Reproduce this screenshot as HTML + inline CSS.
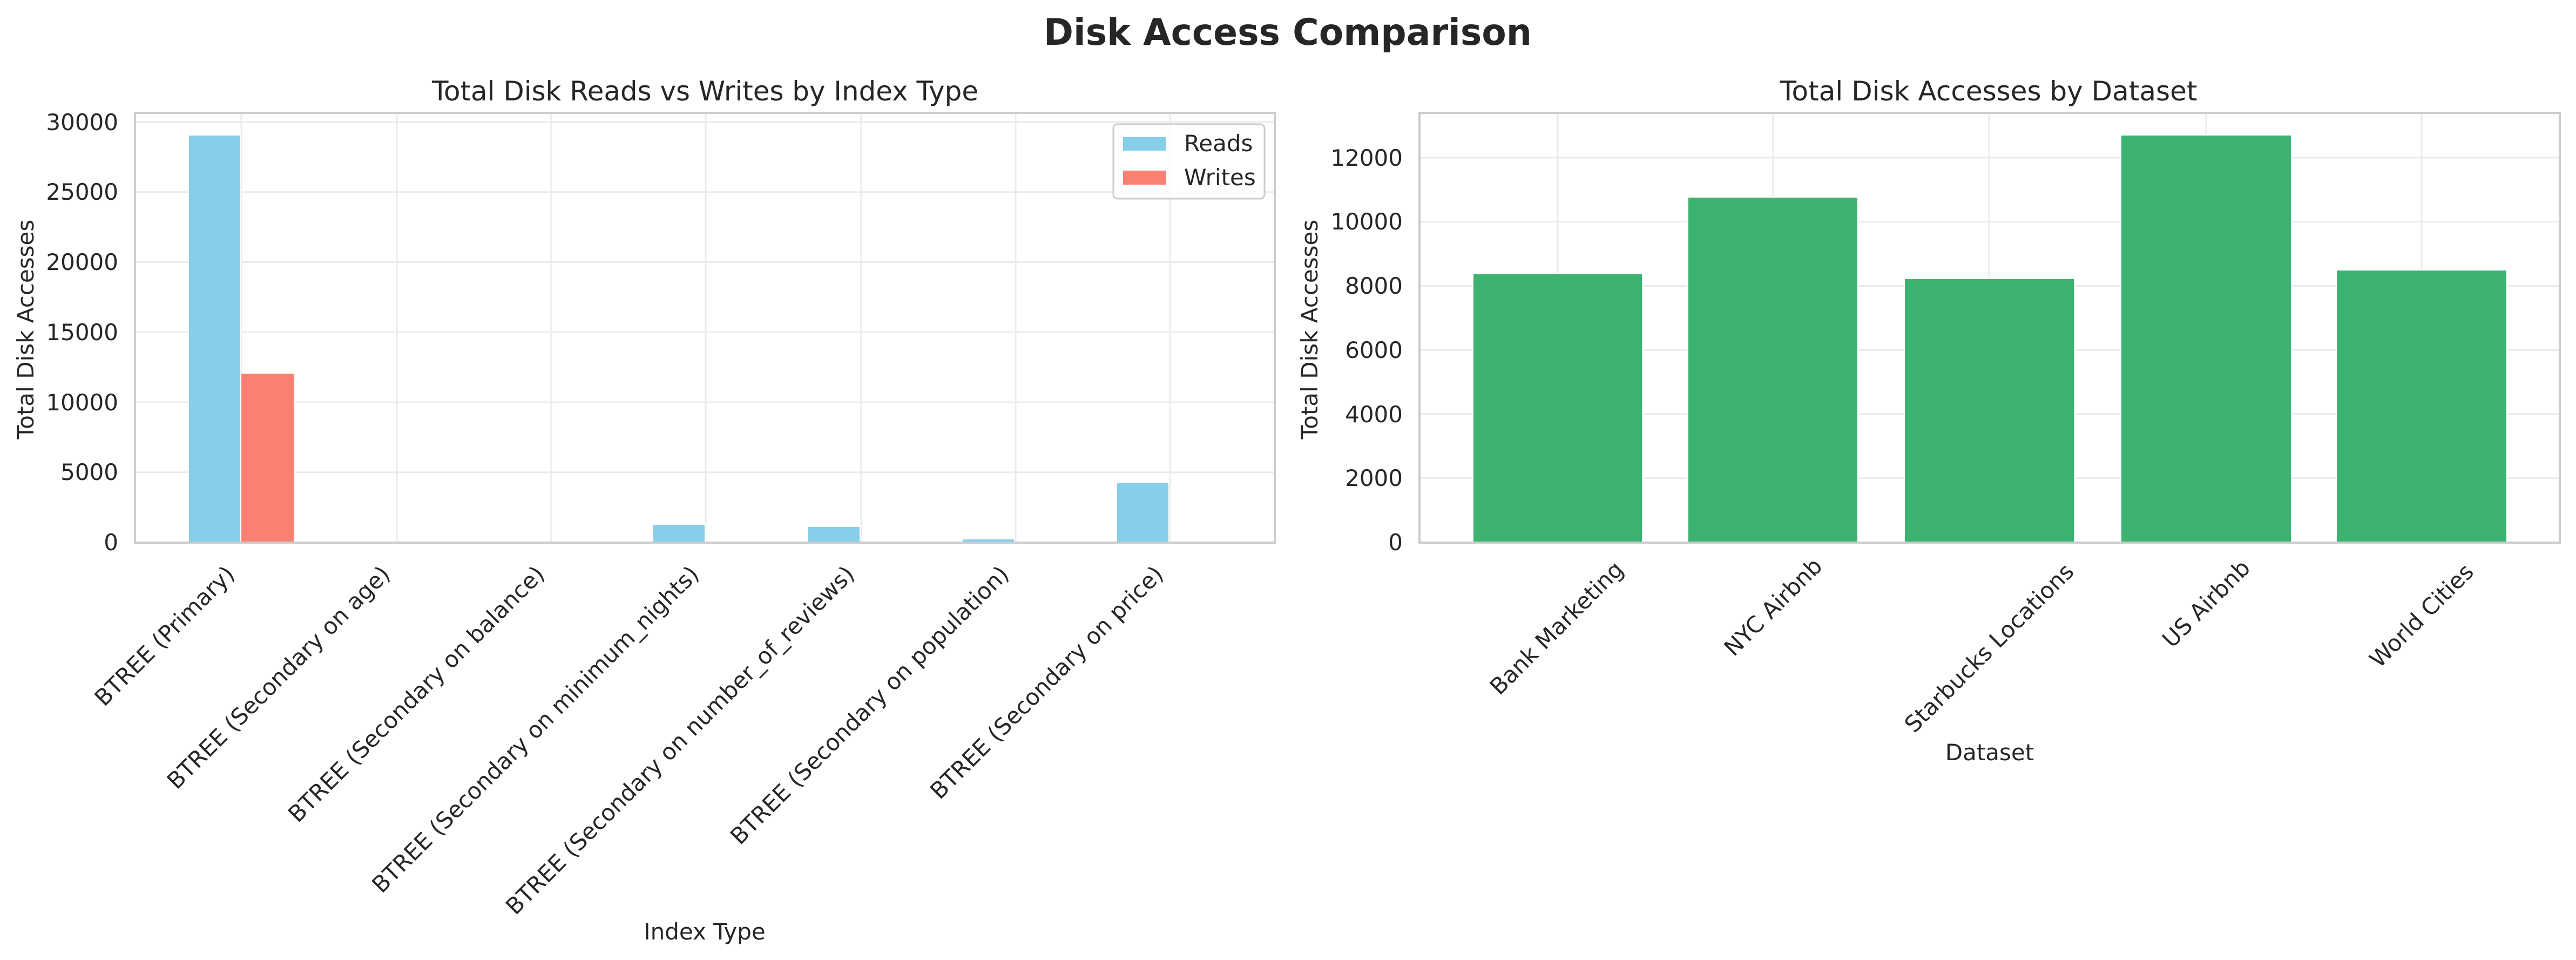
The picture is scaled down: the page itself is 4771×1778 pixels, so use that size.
<!DOCTYPE html>
<html><head><meta charset="utf-8"><style>
html,body{margin:0;padding:0;background:#fff;}
svg{display:block;}
text{font-family:"DejaVu Sans","Liberation Sans",sans-serif;fill:#262626;}
</style></head><body>
<svg width="4771" height="1778" viewBox="0 0 4771 1778" xmlns="http://www.w3.org/2000/svg">
<rect width="4771" height="1778" fill="#fff"/>
<text x="2385" y="83" font-size="68" font-weight="bold" text-anchor="middle" textLength="904" lengthAdjust="spacingAndGlyphs">Disk Access Comparison</text>

<!-- LEFT AXES -->
<text x="1306" y="186" font-size="50" text-anchor="middle" textLength="1012" lengthAdjust="spacingAndGlyphs">Total Disk Reads vs Writes by Index Type</text>
<g stroke="#ebebeb" stroke-width="3">
<line x1="250" x2="2361" y1="1004.5" y2="1004.5"/>
<line x1="250" x2="2361" y1="874.75" y2="874.75"/>
<line x1="250" x2="2361" y1="745" y2="745"/>
<line x1="250" x2="2361" y1="615.25" y2="615.25"/>
<line x1="250" x2="2361" y1="485.5" y2="485.5"/>
<line x1="250" x2="2361" y1="355.75" y2="355.75"/>
<line x1="250" x2="2361" y1="226" y2="226"/>
<line y1="209" y2="1005" x1="447" x2="447"/>
<line y1="209" y2="1005" x1="735" x2="735"/>
<line y1="209" y2="1005" x1="1021" x2="1021"/>
<line y1="209" y2="1005" x1="1307" x2="1307"/>
<line y1="209" y2="1005" x1="1595" x2="1595"/>
<line y1="209" y2="1005" x1="1881" x2="1881"/>
<line y1="209" y2="1005" x1="2167" x2="2167"/>
</g>
<g fill="#87ceeb" stroke="#fff" stroke-width="2">
<rect x="349" y="250" width="97" height="755"/>
<rect x="1209" y="971" width="97" height="34"/>
<rect x="1496" y="975" width="97" height="30"/>
<rect x="1782" y="998" width="97" height="7"/>
<rect x="2068" y="894" width="97" height="111"/>
</g>
<rect x="446" y="691" width="99" height="314" fill="#fa8072" stroke="#fff" stroke-width="2"/>
<rect x="250" y="209" width="2111" height="796" fill="none" stroke="#cccccc" stroke-width="4"/>
<g font-size="42" text-anchor="end">
<text x="219" y="1019">0</text>
<text x="219" y="889">5000</text>
<text x="219" y="760">10000</text>
<text x="219" y="630">15000</text>
<text x="219" y="500">20000</text>
<text x="219" y="370">25000</text>
<text x="219" y="241">30000</text>
</g>
<text transform="translate(62,610) rotate(-90)" font-size="42" text-anchor="middle">Total Disk Accesses</text>
<rect x="2062" y="230" width="280" height="138" rx="8" fill="#fff" fill-opacity="0.8" stroke="#cccccc" stroke-width="3"/>
<rect x="2080" y="254" width="80" height="25" fill="#87ceeb"/>
<rect x="2080" y="316" width="80" height="26" fill="#fa8072"/>
<text x="2193" y="280" font-size="42">Reads</text>
<text x="2193" y="343" font-size="42">Writes</text>
<g font-size="42" text-anchor="end">
<text transform="translate(437,1066) rotate(-45)">BTREE (Primary)</text>
<text transform="translate(725,1066) rotate(-45)">BTREE (Secondary on age)</text>
<text transform="translate(1011,1066) rotate(-45)">BTREE (Secondary on balance)</text>
<text transform="translate(1297,1066) rotate(-45)">BTREE (Secondary on minimum_nights)</text>
<text transform="translate(1585,1066) rotate(-45)">BTREE (Secondary on number_of_reviews)</text>
<text transform="translate(1871,1066) rotate(-45)">BTREE (Secondary on population)</text>
<text transform="translate(2157,1066) rotate(-45)">BTREE (Secondary on price)</text>
</g>
<text x="1305" y="1740" font-size="42" text-anchor="middle">Index Type</text>

<!-- RIGHT AXES -->
<text x="3683" y="186" font-size="50" text-anchor="middle" textLength="773" lengthAdjust="spacingAndGlyphs">Total Disk Accesses by Dataset</text>
<g stroke="#ebebeb" stroke-width="3">
<line x1="2629" x2="4741" y1="1004.5" y2="1004.5"/>
<line x1="2629" x2="4741" y1="885.75" y2="885.75"/>
<line x1="2629" x2="4741" y1="767" y2="767"/>
<line x1="2629" x2="4741" y1="648.25" y2="648.25"/>
<line x1="2629" x2="4741" y1="529.5" y2="529.5"/>
<line x1="2629" x2="4741" y1="410.75" y2="410.75"/>
<line x1="2629" x2="4741" y1="292" y2="292"/>
<line y1="209" y2="1005" x1="2885" x2="2885"/>
<line y1="209" y2="1005" x1="3284" x2="3284"/>
<line y1="209" y2="1005" x1="3684" x2="3684"/>
<line y1="209" y2="1005" x1="4086" x2="4086"/>
<line y1="209" y2="1005" x1="4485" x2="4485"/>
</g>
<g fill="#3cb371" stroke="#fff" stroke-width="2">
<rect x="2728" y="507" width="314" height="498"/>
<rect x="3126" y="365" width="315" height="640"/>
<rect x="3527" y="516" width="315" height="489"/>
<rect x="3928" y="250" width="316" height="755"/>
<rect x="4327" y="500" width="316" height="505"/>
</g>
<rect x="2629" y="209" width="2112" height="796" fill="none" stroke="#cccccc" stroke-width="4"/>
<g font-size="42" text-anchor="end">
<text x="2598" y="1019">0</text>
<text x="2598" y="900">2000</text>
<text x="2598" y="782">4000</text>
<text x="2598" y="663">6000</text>
<text x="2598" y="544">8000</text>
<text x="2598" y="425">10000</text>
<text x="2598" y="307">12000</text>
</g>
<text transform="translate(2440,610) rotate(-90)" font-size="42" text-anchor="middle">Total Disk Accesses</text>
<g font-size="42" text-anchor="middle" dominant-baseline="central">
<text transform="translate(2883,1163) rotate(-45)">Bank Marketing</text>
<text transform="translate(3284,1124) rotate(-45)">NYC Airbnb</text>
<text transform="translate(3684,1200) rotate(-45)">Starbucks Locations</text>
<text transform="translate(4086,1118) rotate(-45)">US Airbnb</text>
<text transform="translate(4485,1140) rotate(-45)">World Cities</text>
</g>
<text x="3685" y="1408" font-size="42" text-anchor="middle">Dataset</text>
</svg>
</body></html>
